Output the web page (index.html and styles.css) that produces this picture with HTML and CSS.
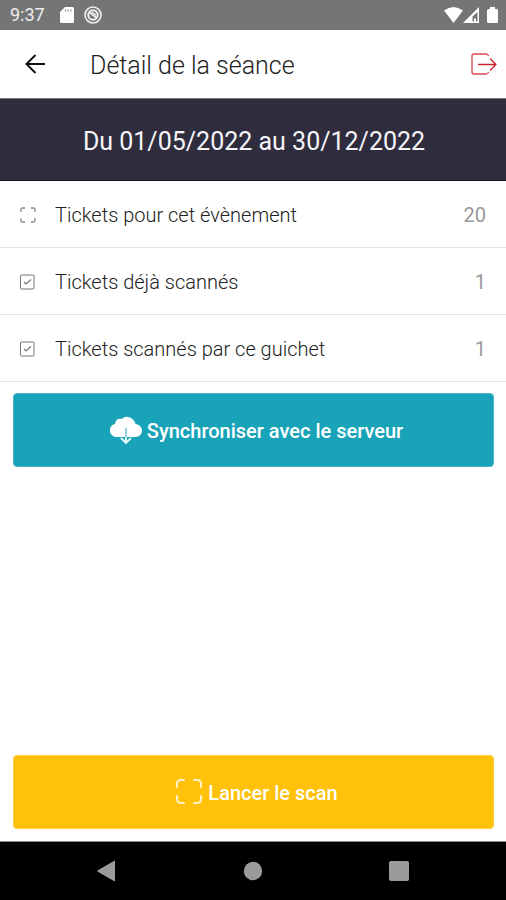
FILE: index.html
```html
<!DOCTYPE html>
<html lang="fr">
<head>
<meta charset="utf-8">
<meta name="viewport" content="width=device-width, initial-scale=1">
<title>Détail de la séance</title>
<link rel="stylesheet" href="styles.css">
</head>
<body>
<div class="status">
  <span class="status-time">9:37</span>
  <svg class="status-card" width="14" height="16" viewBox="0 0 14 16" aria-hidden="true"><path fill="#fff" d="M5 0h7.500Q14 0 14 1.500V14.500Q14 16 12.500 16H1.500Q0 16 0 14.500V5z"/><path stroke="#aaa" stroke-width="1.200" d="M5.500 2v3M8.200 2v3M11 2v3"/></svg>
  <svg width="18" height="18" viewBox="0 0 18 18" fill="none" stroke="#eee" aria-hidden="true"><circle cx="9" cy="9" r="8" stroke-width="1.600"/><circle cx="9" cy="9" r="4.700" stroke-width="2"/><path stroke-width="1.800" d="M5 6l8 6"/><path stroke-width="1.200" d="M8 6l4 3"/></svg>
  <span class="status-space"></span>
  <svg width="19" height="16" viewBox="0 0 19 16" aria-hidden="true"><path fill="#fff" d="M0 3.500Q9.500-3.500 19 3.500L9.500 16z"/></svg>
  <svg width="16" height="16" viewBox="0 0 16 16" aria-hidden="true"><path fill="#fff" fill-rule="evenodd" d="M16 0v16H0zM14.500 5L9.500 9.500v5h1.500v-3h2v3h1.500z"/></svg>
  <svg class="status-battery" width="11" height="16" viewBox="0 0 11 16" aria-hidden="true"><path fill="#fff" d="M3 0h5v2h1.500Q11 2 11 3.500v11Q11 16 9.500 16h-8Q0 16 0 14.500v-11Q0 2 1.500 2H3z"/></svg>
</div>
<header class="header">
  <button class="icon-button" type="button" aria-label="Retour"><svg width="20" height="20" viewBox="0 0 20 20" fill="none" stroke="#111" stroke-width="2" aria-hidden="true"><path d="M20 10H2M10.500 1L1.500 10l9 9"/></svg></button>
  <h1 class="title">Détail de la séance</h1>
  <button class="icon-button" type="button" aria-label="Déconnexion"><svg width="26" height="22" viewBox="0 0 26 22" fill="none" stroke="#d9464f" stroke-width="1.300" stroke-linecap="round" stroke-linejoin="round" aria-hidden="true"><path d="M17.500 2.500Q16.500 1 14.500 1H3Q1 1 1 3v16q0 2 2 2h11.500q2 0 3-1.500"/><path stroke="#cf202c" d="M7.500 11.500H25M19.500 6l5.500 5.500-5.500 5.500"/></svg></button>
</header>
<main class="main">
  <h2 class="banner">Du 01/05/2022 au 30/12/2022</h2>
  <ul class="rows">
    <li class="row">
      <svg width="16" height="16" viewBox="0 0 16 16" fill="none" stroke="#888" stroke-width="1.300" aria-hidden="true"><path d="M1 5V2.500Q1 1 2.500 1H5M11 1h2.500Q15 1 15 2.500V5M15 11v2.500q0 1.500-1.500 1.500H11M5 15H2.500Q1 15 1 13.500V11"/></svg>
      <span class="row-label">Tickets pour cet évènement</span><span class="row-value">20</span>
    </li>
    <li class="row">
      <svg width="16" height="16" viewBox="0 0 16 16" fill="none" stroke="#777" aria-hidden="true"><rect x="0.500" y="1" width="13.500" height="14" rx="1"/><path stroke-width="1.200" d="M4 8l2 2 5-4.500"/></svg>
      <span class="row-label">Tickets déjà scannés</span><span class="row-value">1</span>
    </li>
    <li class="row">
      <svg width="16" height="16" viewBox="0 0 16 16" fill="none" stroke="#777" aria-hidden="true"><rect x="0.500" y="1" width="13.500" height="14" rx="1"/><path stroke-width="1.200" d="M4 8l2 2 5-4.500"/></svg>
      <span class="row-label">Tickets scannés par ce guichet</span><span class="row-value">1</span>
    </li>
  </ul>
  <button class="action action-sync" type="button">
    <svg width="32" height="28" viewBox="0 0 32 28" aria-hidden="true"><path fill="#fff" d="M7 21C3 21 0 18.500 0 14.500 0 11 2 8.500 5 8 5.500 3.500 8.500 2 12 3c2-2.200 5-3 8-1.500C23 3 25 5 25.500 8c3.500.500 6.500 3 6.500 6.500 0 4-3 6.500-7 6.500z"/><path fill="none" stroke="#8fd0da" stroke-width="2" d="M16 12v10"/><path fill="none" stroke="#e4f6f8" stroke-width="2" stroke-linecap="round" stroke-linejoin="round" d="M16 22v4M11.500 22.500l4.500 4.500 4.500-4.500"/></svg>
    <span>Synchroniser avec le serveur</span>
  </button>
  <button class="action action-scan" type="button">
    <svg width="28" height="26" viewBox="0 0 28 26" fill="none" stroke="#fff0c5" stroke-width="2" stroke-linecap="round" aria-hidden="true"><path d="M2 8V5q0-4 4-4h3M19 1h3q4 0 4 4v3M26 17v3q0 4-4 4h-3M9 24H6q-4 0-4-4v-3"/></svg>
    <span>Lancer le scan</span>
  </button>
</main>
<nav class="nav" aria-label="Système">
  <button class="icon-button" type="button" aria-label="Précédent"><svg width="20" height="22" viewBox="0 0 20 22" aria-hidden="true"><path fill="#9b9b9b" d="M19 1v20q0 .500-.800.300L1.500 11.600q-.700-.600 0-1.200L18.200.700Q19 .500 19 1z"/></svg></button>
  <button class="icon-button" type="button" aria-label="Accueil"><svg width="20" height="20" viewBox="0 0 20 20" aria-hidden="true"><circle cx="10" cy="10" r="9.200" fill="#9b9b9b"/></svg></button>
  <button class="icon-button" type="button" aria-label="Applications récentes"><svg width="20" height="20" viewBox="0 0 20 20" aria-hidden="true"><rect width="20" height="20" rx="2" fill="#9b9b9b"/></svg></button>
</nav>
</body>
</html>
```
FILE: styles.css
```css
* { box-sizing: border-box; }
body {
  margin: 0;
  min-height: 100vh;
  display: flex;
  flex-direction: column;
  background: #fff;
  font-family: Roboto, "Liberation Sans", sans-serif;
  color: #222;
}
svg { display: block; flex: none; }
button { font-family: inherit; cursor: pointer; }
.icon-button { padding: 0; border: 0; background: none; }
.status {
  display: flex;
  align-items: center;
  height: 30px;
  padding: 0 8px 0 10px;
  background: #757575;
  color: #eee;
}
.status-time { font-size: 18px; line-height: 30px; }
.status-card { margin: 0 10px 0 15px; }
.status-space { flex: 1; }
.status-battery { margin-left: 8px; }
.header {
  display: flex;
  align-items: center;
  height: 69px;
  padding: 0 9px 0 25px;
  border-bottom: 1px solid #777;
}
.title {
  flex: 1;
  margin: 0 0 0 45px;
  padding-top: 4px;
  font-size: 25px;
  line-height: 32px;
  font-weight: 300;
}
.main { flex: 1; display: flex; flex-direction: column; }
.banner {
  margin: 0;
  padding: 27px 12px 22px 14px;
  border-bottom: 1px solid #111018;
  background: #2f2c3d;
  color: #f5f5f8;
  font-size: 25px;
  line-height: 32px;
  font-weight: 400;
  text-align: center;
}
.rows { margin: 0; padding: 0; list-style: none; }
.row {
  display: flex;
  align-items: center;
  gap: 19px;
  padding: 22px 20px 20px;
  border-bottom: 1px solid #e4e4e4;
  font-size: 20px;
  line-height: 24px;
}
.row-label { flex: 1; font-weight: 300; }
.row-value { color: #999; }
.action {
  display: flex;
  align-items: center;
  justify-content: center;
  gap: 5px;
  margin: 11px 12px 12px 13px;
  padding: 25px 12px 23px 18px;
  border: 1px solid;
  border-radius: 4px;
  color: #fff;
  font-size: 20px;
  line-height: 24px;
  font-weight: 500;
}
.action svg { margin: -3px 0 -1px; }
.action-sync { background: #18a3b9; border-color: #4db5c7; }
.action-scan { margin-top: auto; background: #ffc10a; border-color: #ffcd3c; }
.nav {
  display: flex;
  justify-content: space-between;
  align-items: center;
  height: 59px;
  padding: 0 97px 0 96px;
  border-top: 1px solid #888;
  background: #000;
}
```
